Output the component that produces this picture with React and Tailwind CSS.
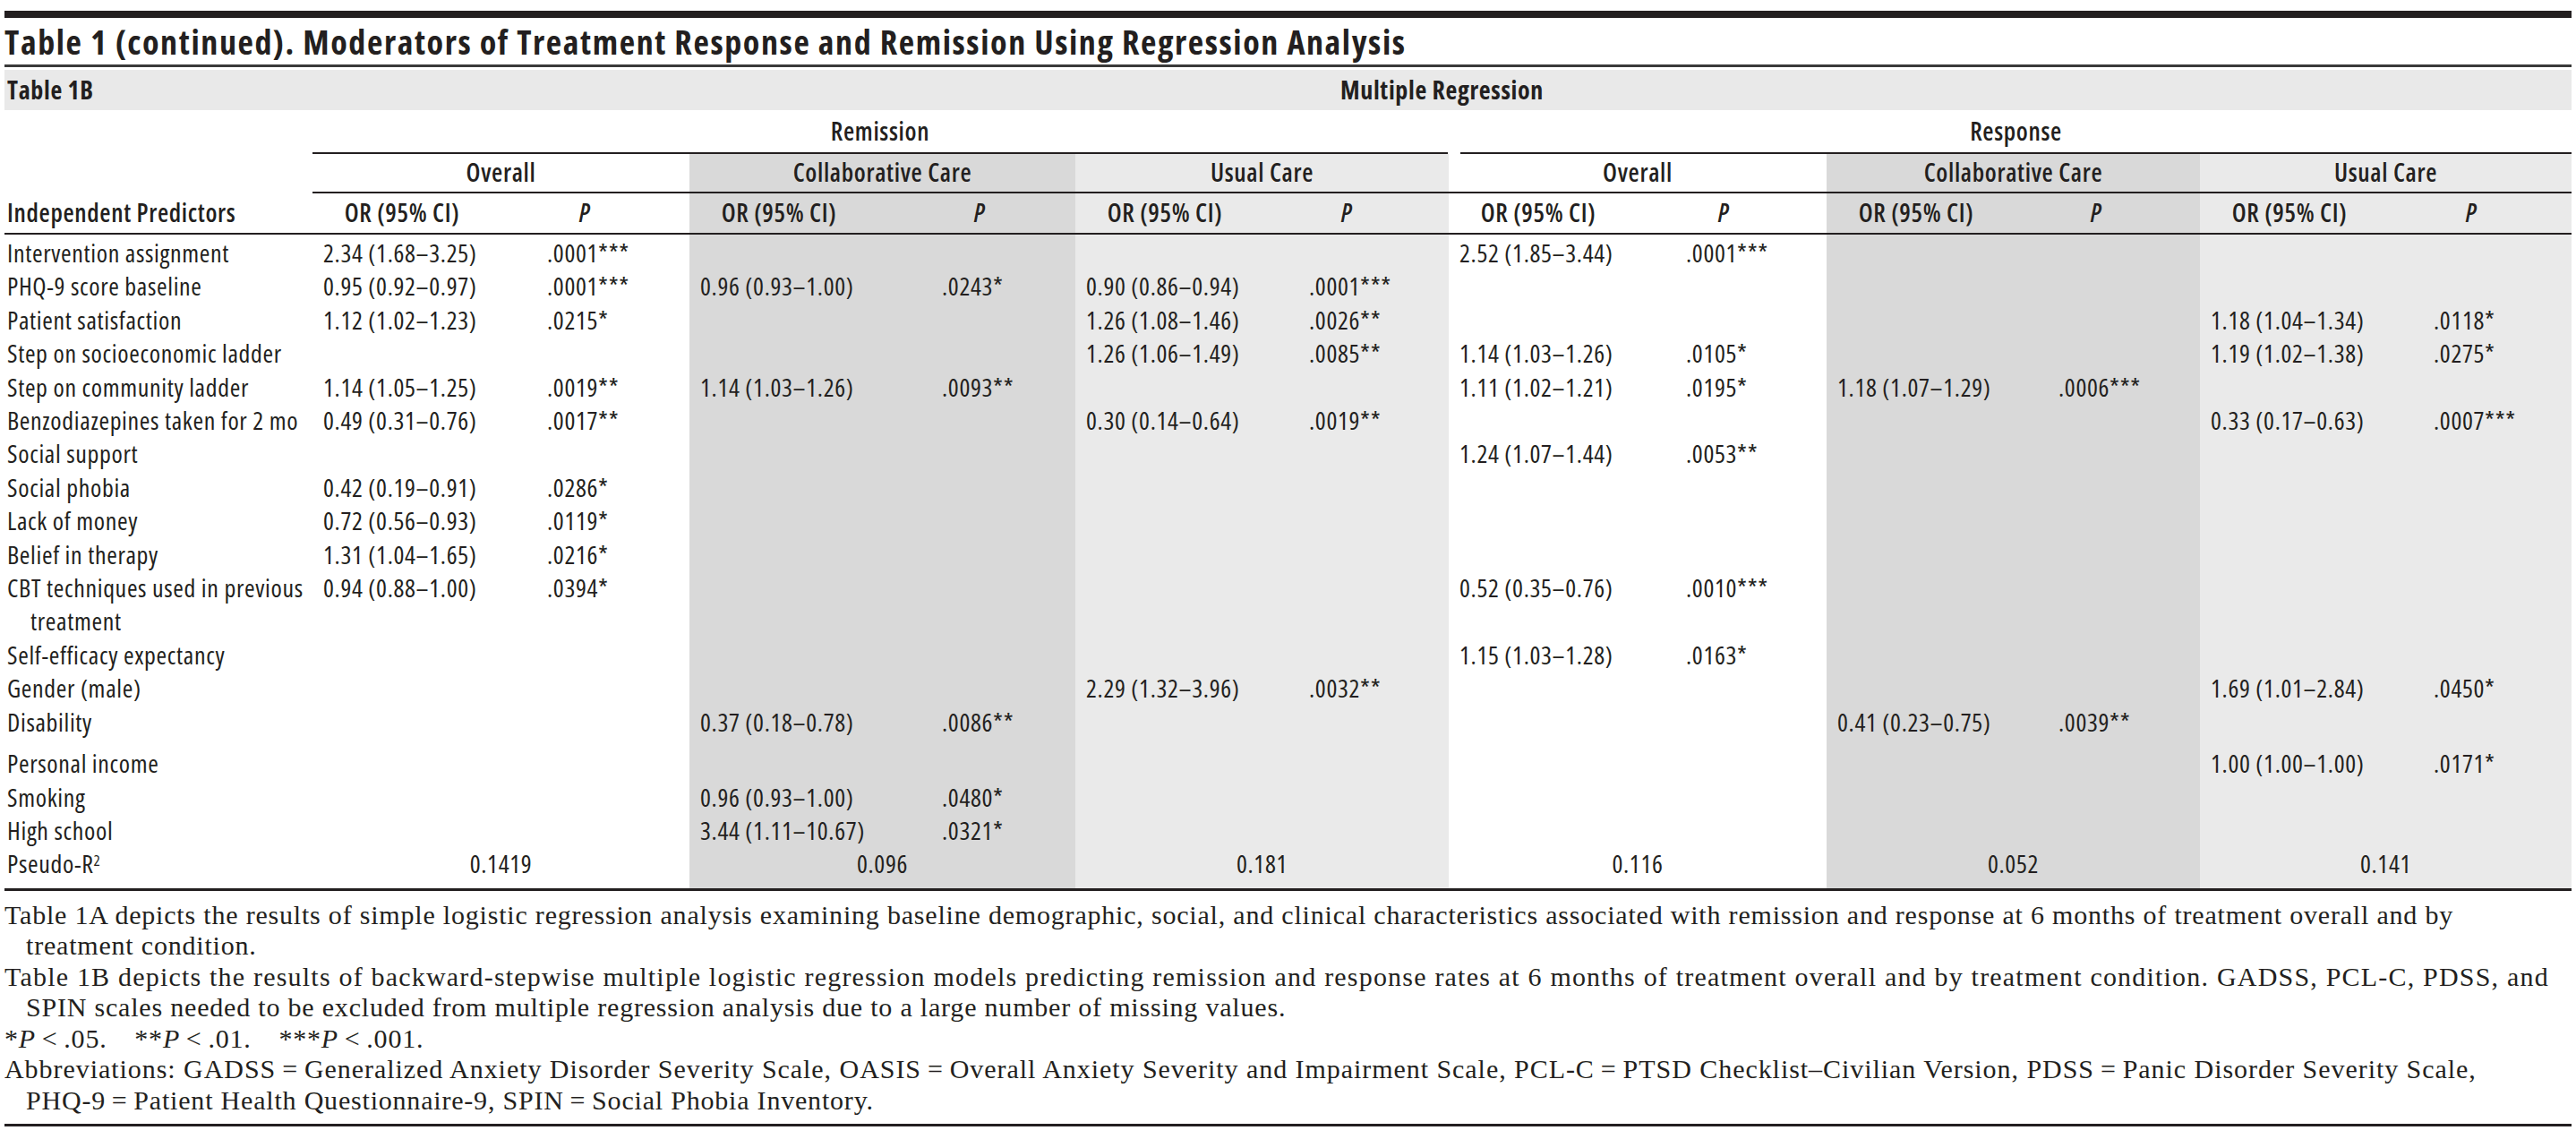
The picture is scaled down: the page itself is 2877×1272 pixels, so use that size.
import React from 'react';

// Open Sans condensed face, opened up a little with tracking
const SANS = "font-['Open_Sans',sans-serif] [font-stretch:75%] tracking-[0.65px]";
const SERIF = "font-['Liberation_Serif',serif]";

// group widths / shading / OR column width (P column starts after it)
const GROUPS = [
  { w: 'w-[421px]', bg: 'bg-white', or: 'w-[262px]' },
  { w: 'w-[431px]', bg: 'bg-[#d9d9d9]', or: 'w-[282px]' },
  { w: 'w-[417px]', bg: 'bg-[#eaeaea]', or: 'w-[261px]' },
  { w: 'w-[422px]', bg: 'bg-white', or: 'w-[265px]' },
  { w: 'w-[417px]', bg: 'bg-[#d9d9d9]', or: 'w-[259px]' },
  { w: 'w-[415px]', bg: 'bg-[#eaeaea]', or: 'w-[261px]' },
];

const _ = null;

const ROWS = [
  { label: 'Intervention assignment', cells: [['2.34 (1.68–3.25)', '.0001***'], _, _, ['2.52 (1.85–3.44)', '.0001***'], _, _] },
  { label: 'PHQ-9 score baseline', cells: [['0.95 (0.92–0.97)', '.0001***'], ['0.96 (0.93–1.00)', '.0243*'], ['0.90 (0.86–0.94)', '.0001***'], _, _, _] },
  { label: 'Patient satisfaction', cells: [['1.12 (1.02–1.23)', '.0215*'], _, ['1.26 (1.08–1.46)', '.0026**'], _, _, ['1.18 (1.04–1.34)', '.0118*']] },
  { label: 'Step on socioeconomic ladder', cells: [_, _, ['1.26 (1.06–1.49)', '.0085**'], ['1.14 (1.03–1.26)', '.0105*'], _, ['1.19 (1.02–1.38)', '.0275*']] },
  { label: 'Step on community ladder', cells: [['1.14 (1.05–1.25)', '.0019**'], ['1.14 (1.03–1.26)', '.0093**'], _, ['1.11 (1.02–1.21)', '.0195*'], ['1.18 (1.07–1.29)', '.0006***'], _] },
  { label: 'Benzodiazepines taken for 2 mo', cells: [['0.49 (0.31–0.76)', '.0017**'], _, ['0.30 (0.14–0.64)', '.0019**'], _, _, ['0.33 (0.17–0.63)', '.0007***']] },
  { label: 'Social support', cells: [_, _, _, ['1.24 (1.07–1.44)', '.0053**'], _, _] },
  { label: 'Social phobia', cells: [['0.42 (0.19–0.91)', '.0286*'], _, _, _, _, _] },
  { label: 'Lack of money', cells: [['0.72 (0.56–0.93)', '.0119*'], _, _, _, _, _] },
  { label: 'Belief in therapy', cells: [['1.31 (1.04–1.65)', '.0216*'], _, _, _, _, _] },
  { label: 'CBT techniques used in previous', cont: 'treatment', cells: [['0.94 (0.88–1.00)', '.0394*'], _, _, ['0.52 (0.35–0.76)', '.0010***'], _, _] },
  { label: 'Self-efficacy expectancy', cells: [_, _, _, ['1.15 (1.03–1.28)', '.0163*'], _, _] },
  { label: 'Gender (male)', cells: [_, _, ['2.29 (1.32–3.96)', '.0032**'], _, _, ['1.69 (1.01–2.84)', '.0450*']] },
  { label: 'Disability', extra: true, cells: [_, ['0.37 (0.18–0.78)', '.0086**'], _, _, ['0.41 (0.23–0.75)', '.0039**'], _] },
  { label: 'Personal income', cells: [_, _, _, _, _, ['1.00 (1.00–1.00)', '.0171*']] },
  { label: 'Smoking', cells: [_, ['0.96 (0.93–1.00)', '.0480*'], _, _, _, _] },
  { label: 'High school', cells: [_, ['3.44 (1.11–10.67)', '.0321*'], _, _, _, _] },
];

const PSEUDO = ['0.1419', '0.096', '0.181', '0.116', '0.052', '0.141'];

const Spacer = ({ h }) => (
  <div className="flex">
    <div className={`w-[344px] shrink-0 ${h}`} />
    {GROUPS.map((g, i) => (
      <div key={i} className={`shrink-0 ${g.w} ${g.bg} ${h}`} />
    ))}
  </div>
);

const DataRow = ({ row }) => (
  <div className="flex">
    <div className={`w-[344px] shrink-0 pl-[3px] whitespace-nowrap ${row.extra ? 'pb-[9px]' : ''}`}>
      <div>{row.label}</div>
      {row.cont ? <div className="pl-[26px]">{row.cont}</div> : null}
    </div>
    {GROUPS.map((g, i) => {
      const c = row.cells[i];
      return (
        <div key={i} className={`flex shrink-0 ${g.w} ${g.bg}`}>
          <div className={`${g.or} shrink-0 pl-[12px] whitespace-nowrap`}>{c ? c[0] : ''}</div>
          <div className="whitespace-nowrap">{c ? c[1] : ''}</div>
        </div>
      );
    })}
  </div>
);

export default function App() {
  return (
    <div className="min-h-[1272px] bg-white pt-[12px] pl-[5px] text-[#231f20]">
      <div className="w-[2867px]">
        {/* top rule */}
        <div className="h-[8px] bg-[#231f20]" />

        <div className="flex h-[52px] items-center font-['Open_Sans',sans-serif] [font-stretch:75%] text-[38px] font-bold tracking-[1.6px] whitespace-nowrap">
          Table 1 (continued). Moderators of Treatment Response and Remission Using Regression Analysis
        </div>
        <div className="h-[3px] bg-[#3a3a3a]" />
        <div className="h-[3px]" />

        <div className={`${SANS} text-[28px] leading-[37.4px]`}>
          <div className="flex h-[45px] items-center bg-[#e9e9e9] font-bold">
            <div className="w-[344px] shrink-0 pl-[3px]">Table 1B</div>
            <div className="flex-1 text-center">Multiple Regression</div>
          </div>

          <div className="flex h-[49px] font-semibold">
            <div className="w-[344px] shrink-0" />
            <div className="flex w-[1268px] shrink-0 items-center justify-center border-b-2 border-[#231f20]">
              Remission
            </div>
            <div className="ml-[14px] flex w-[1241px] shrink-0 items-center justify-center border-b-2 border-[#231f20]">
              Response
            </div>
          </div>

          <div className="flex h-[44px] font-semibold">
            <div className="w-[344px] shrink-0" />
            {['Overall', 'Collaborative Care', 'Usual Care', 'Overall', 'Collaborative Care', 'Usual Care'].map((t, i) => (
              <div
                key={i}
                className={`flex shrink-0 items-center justify-center border-b-2 border-[#231f20] ${GROUPS[i].w} ${GROUPS[i].bg}`}
              >
                {t}
              </div>
            ))}
          </div>

          <div className="flex h-[46px] border-b-2 border-[#231f20] font-semibold">
            <div className="flex w-[344px] shrink-0 items-center pl-[3px]">Independent Predictors</div>
            {GROUPS.map((g, i) => (
              <div key={i} className={`flex shrink-0 ${g.w} ${g.bg}`}>
                <div className={`${g.or} flex shrink-0 items-center pl-[12px]`}>
                  <div className="w-[176px] text-center">OR (95% CI)</div>
                </div>
                <div className="flex items-center">
                  <div className="w-[84px] text-center font-semibold italic">P</div>
                </div>
              </div>
            ))}
          </div>

          <Spacer h="h-[2px]" />
          {ROWS.map((r) => (
            <DataRow key={r.label} row={r} />
          ))}

          <div className="flex">
            <div className="w-[344px] shrink-0 pl-[3px]">
              Pseudo-R<sup className="text-[17px]">2</sup>
            </div>
            {GROUPS.map((g, i) => (
              <div key={i} className={`shrink-0 text-center ${g.w} ${g.bg}`}>
                {PSEUDO[i]}
              </div>
            ))}
          </div>
          <Spacer h="h-[8px]" />
          <div className="h-[3px] bg-[#231f20]" />
        </div>

        <div className={`${SERIF} pt-[10px] pb-[9px] text-[30px] leading-[34.5px] tracking-[0.8px] whitespace-nowrap`}>
          <div>
            Table 1A depicts the results of simple logistic regression analysis examining baseline demographic, social, and clinical characteristics associated with remission and response at 6 months of treatment overall and by
          </div>
          <div className="pl-[24px]">treatment condition.</div>
          <div className="tracking-[1.2px]">
            Table 1B depicts the results of backward-stepwise multiple logistic regression models predicting remission and response rates at 6 months of treatment overall and by treatment condition. GADSS, PCL-C, PDSS, and
          </div>
          <div className="pl-[24px]">
            SPIN scales needed to be excluded from multiple regression analysis due to a large number of missing values.
          </div>
          <div>
            *<i>P</i>{'\u2009<\u2009'}.05.{'\u2003'}**<i>P</i>{'\u2009<\u2009'}.01.{'\u2003'}***<i>P</i>{'\u2009<\u2009'}.001.
          </div>
          <div className="tracking-[0.95px]">
            Abbreviations: GADSS{'\u2009=\u2009'}Generalized Anxiety Disorder Severity Scale, OASIS{'\u2009=\u2009'}Overall Anxiety Severity and Impairment Scale, PCL-C{'\u2009=\u2009'}PTSD Checklist–Civilian Version, PDSS{'\u2009=\u2009'}Panic Disorder Severity Scale,
          </div>
          <div className="pl-[24px]">
            PHQ-9{'\u2009=\u2009'}Patient Health Questionnaire-9, SPIN{'\u2009=\u2009'}Social Phobia Inventory.
          </div>
        </div>
        <div className="h-[3px] bg-[#231f20]" />
      </div>
    </div>
  );
}
